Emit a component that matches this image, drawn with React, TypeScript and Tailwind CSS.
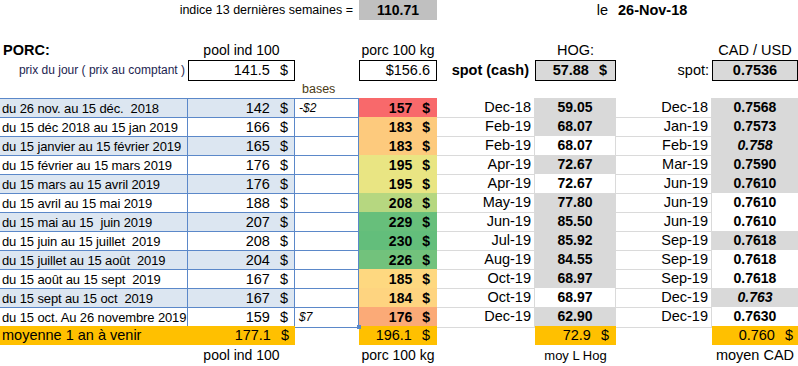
const cols = 'grid grid-cols-[188px_107px_64px_78px_98px_81px_96px_86px]';

type Row = {
  periode: string;
  pool: string;
  base: string;
  porc: string;
  tint: string;
  hogMois: string;
  hog: string;
  hogGris: boolean;
  cadMois: string;
  cad: string;
  cadGris: boolean;
  cadItal: boolean;
};

const rows: Row[] = [
  { periode: 'du 26 nov. au 15 déc.  2018', pool: '142', base: '-$2', porc: '157', tint: 'bg-[#f8696b]', hogMois: 'Dec-18', hog: '59.05', hogGris: true, cadMois: 'Dec-18', cad: '0.7568', cadGris: true, cadItal: false },
  { periode: 'du 15 déc 2018 au 15 jan 2019', pool: '166', base: '', porc: '183', tint: 'bg-[#fdca7d]', hogMois: 'Feb-19', hog: '68.07', hogGris: true, cadMois: 'Jan-19', cad: '0.7573', cadGris: true, cadItal: false },
  { periode: 'du 15 janvier au 15 février 2019', pool: '165', base: '', porc: '183', tint: 'bg-[#fdca7d]', hogMois: 'Feb-19', hog: '68.07', hogGris: false, cadMois: 'Feb-19', cad: '0.758', cadGris: true, cadItal: true },
  { periode: 'du 15 février au 15 mars 2019', pool: '176', base: '', porc: '195', tint: 'bg-[#e9e583]', hogMois: 'Apr-19', hog: '72.67', hogGris: true, cadMois: 'Mar-19', cad: '0.7590', cadGris: true, cadItal: false },
  { periode: 'du 15 mars au 15 avril 2019', pool: '176', base: '', porc: '195', tint: 'bg-[#e9e583]', hogMois: 'Apr-19', hog: '72.67', hogGris: false, cadMois: 'Jun-19', cad: '0.7610', cadGris: true, cadItal: false },
  { periode: 'du 15 avril au 15 mai 2019', pool: '188', base: '', porc: '208', tint: 'bg-[#b6d780]', hogMois: 'May-19', hog: '77.80', hogGris: true, cadMois: 'Jun-19', cad: '0.7610', cadGris: false, cadItal: false },
  { periode: 'du 15 mai au 15  juin 2019', pool: '207', base: '', porc: '229', tint: 'bg-[#67bf7b]', hogMois: 'Jun-19', hog: '85.50', hogGris: true, cadMois: 'Jun-19', cad: '0.7610', cadGris: false, cadItal: false },
  { periode: 'du 15 juin au 15 juillet  2019', pool: '208', base: '', porc: '230', tint: 'bg-[#63be7b]', hogMois: 'Jul-19', hog: '85.92', hogGris: true, cadMois: 'Sep-19', cad: '0.7618', cadGris: true, cadItal: false },
  { periode: 'du 15 juillet au 15 août  2019', pool: '204', base: '', porc: '226', tint: 'bg-[#72c27c]', hogMois: 'Aug-19', hog: '84.55', hogGris: true, cadMois: 'Sep-19', cad: '0.7618', cadGris: false, cadItal: false },
  { periode: 'du 15 août au 15 sept  2019', pool: '167', base: '', porc: '185', tint: 'bg-[#fed880]', hogMois: 'Oct-19', hog: '68.97', hogGris: true, cadMois: 'Sep-19', cad: '0.7618', cadGris: false, cadItal: false },
  { periode: 'du 15 sept au 15 oct  2019', pool: '167', base: '', porc: '184', tint: 'bg-[#fed480]', hogMois: 'Oct-19', hog: '68.97', hogGris: false, cadMois: 'Dec-19', cad: '0.763', cadGris: true, cadItal: true },
  { periode: 'du 15 oct. Au 26 novembre 2019', pool: '159', base: '$7', porc: '176', tint: 'bg-[#fbaa77]', hogMois: 'Dec-19', hog: '62.90', hogGris: true, cadMois: 'Dec-19', cad: '0.7630', cadGris: false, cadItal: false },
];

function Dollar({ value, bold, pr }: { value: string; bold?: boolean; pr: string }) {
  return (
    <div className={`flex h-full items-center justify-end gap-[10px] ${pr} ${bold ? 'font-bold' : ''}`}>
      <span>{value}</span>
      <span>$</span>
    </div>
  );
}

export default function App() {
  return (
    <main className="h-[366px] w-[798px] overflow-hidden bg-white font-['Liberation_Sans',Arial,sans-serif] text-[14.5px] leading-[19px] text-black">
      {/* en-tête */}
      <div className={`${cols} h-[21px]`}>
        <div className="col-span-3 flex items-center justify-end pr-[6px] text-[12.5px]">indice 13 dernières semaines =</div>
        <div className="flex h-[20px] items-center justify-center bg-[#c0c0c0] text-[14px] font-bold">110.71</div>
        <div />
        <div className="flex items-center justify-end pr-[8px]">le</div>
        <div className="flex items-center pl-[2px] font-bold">26-Nov-18</div>
        <div />
      </div>
      <div className="h-[20px]" />
      <div className={`${cols} h-[19px]`}>
        <div className="pl-[3px] font-bold">PORC:</div>
        <div className="text-center text-[14px]">pool ind 100</div>
        <div />
        <div className="text-center text-[14px]">porc 100 kg</div>
        <div />
        <div className="text-center">HOG:</div>
        <div />
        <div className="text-center">CAD / USD</div>
      </div>
      <div className={`${cols} h-[20px]`}>
        <div className="flex items-center justify-end pr-[3px] text-[12px] text-[#1c2450]">prix du jour ( prix au comptant )</div>
        <div className="border border-black">
          <Dollar value="141.5" pr="pr-[6px]" />
        </div>
        <div />
        <div className="flex items-center justify-end border border-black pr-[6px]">$156.6</div>
        <div className="flex items-center justify-end pr-[6px] font-bold">spot (cash)</div>
        <div className="border border-black bg-[#d9d9d9]">
          <Dollar value="57.88" bold pr="pr-[8px]" />
        </div>
        <div className="flex items-center justify-end pr-[3px]">spot:</div>
        <div className="flex items-center justify-center border border-black bg-[#d9d9d9] font-bold">0.7536</div>
      </div>
      <div className={`${cols} h-[18px]`}>
        <div />
        <div />
        <div className="pl-[7px] text-[12.5px] leading-[18px] text-[#4a3b16]">bases</div>
      </div>

      {/* tableau */}
      {rows.map((r, i) => {
        const bleu = i % 2 === 0 ? 'bg-[#dce6f1]' : 'bg-white';
        const last = i === rows.length - 1;
        return (
          <div key={i} className={`${cols} h-[19px]`}>
            <div className={`${bleu} whitespace-pre border-t border-r border-[#5b88c9] pl-[2px] text-[13px] tracking-[-0.12px] ${last ? 'border-b' : ''}`}>
              {r.periode}
            </div>
            <div className={`${bleu} border-t border-r border-[#5b88c9] ${last ? 'border-b' : ''}`}>
              <Dollar value={r.pool} pr="pr-[6px]" />
            </div>
            <div className={`relative border-t border-r border-[#5b88c9] pl-[4px] text-[12px] italic ${last ? 'border-b' : ''}`}>
              {r.base}
              {last && <span className="absolute -bottom-[2px] -right-[3px] h-[4px] w-[4px] bg-[#5b88c9]" />}
            </div>
            <div className={`${r.tint} text-[14px]`}>
              <Dollar value={r.porc} bold pr="pr-[7px]" />
            </div>
            <div className="border-b border-r border-[#dadada] pr-[3px] text-right">{r.hogMois}</div>
            <div
              className={`border-b border-r text-center text-[14px] font-bold ${
                r.hogGris ? 'border-[#d9d9d9] bg-[#d9d9d9]' : 'border-[#dadada] bg-white'
              }`}
            >
              {r.hog}
            </div>
            <div className="border-b border-r border-[#dadada] pr-[3px] text-right">{r.cadMois}</div>
            <div
              className={`border-b text-center text-[14px] font-bold ${r.cadItal ? 'italic' : ''} ${
                r.cadGris ? 'border-[#d9d9d9] bg-[#d9d9d9]' : 'border-[#dadada] bg-white'
              }`}
            >
              {r.cad}
            </div>
          </div>
        );
      })}

      {/* moyennes */}
      <div className={`${cols} h-[19px]`}>
        <div className="col-span-2 flex bg-[#ffc000]">
          <div className="w-[188px] pl-[2px]">moyenne 1 an à venir</div>
          <div className="flex-1">
            <Dollar value="177.1" pr="pr-[6px]" />
          </div>
        </div>
        <div />
        <div className="bg-[#ffc000]">
          <Dollar value="196.1" pr="pr-[7px]" />
        </div>
        <div />
        <div className="bg-[#ffc000]">
          <Dollar value="72.9" pr="pr-[7px]" />
        </div>
        <div />
        <div className="bg-[#ffc000]">
          <Dollar value="0.760" pr="pr-[5px]" />
        </div>
      </div>
      <div className={`${cols} h-[21px] leading-[21px]`}>
        <div />
        <div className="text-center text-[14px]">pool ind 100</div>
        <div />
        <div className="text-center text-[14px]">porc 100 kg</div>
        <div />
        <div className="text-center text-[13px]">moy L Hog</div>
        <div />
        <div className="text-center">moyen CAD</div>
      </div>
    </main>
  );
}
